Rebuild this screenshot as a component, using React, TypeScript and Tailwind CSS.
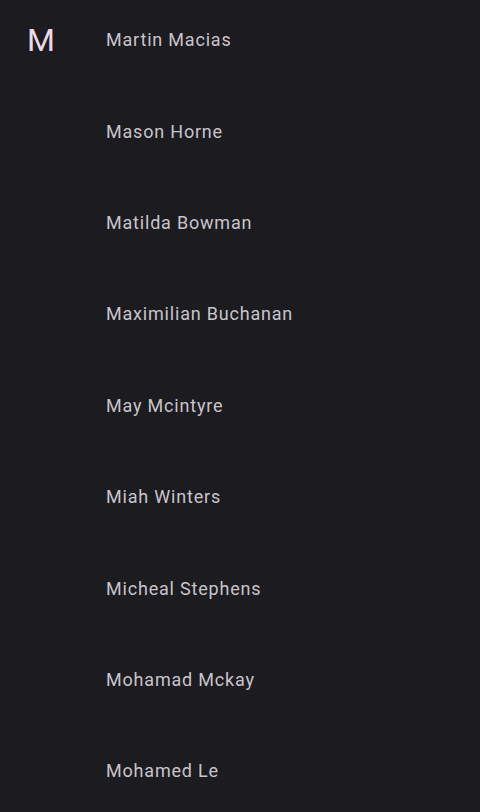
import React from "react";

const names = [
  "Martin Macias",
  "Mason Horne",
  "Matilda Bowman",
  "Maximilian Buchanan",
  "May Mcintyre",
  "Miah Winters",
  "Micheal Stephens",
  "Mohamad Mckay",
  "Mohamed Le",
];

export default function App() {
  return (
    <div
      className="w-[480px] h-[812px] overflow-hidden bg-[#1c1b1f]"
      style={{ fontFamily: "Roboto, 'Liberation Sans', sans-serif" }}
    >
      <div className="-mt-[6px] flex flex-col">
        {names.map((n, i) => (
          <div key={n} className="h-[91.4px] flex items-center">
            <div className="w-[106px] pl-[27px] flex items-center">
              {i === 0 && (
                <span className="text-[32px] leading-none text-[#ecd8e6]">M</span>
              )}
            </div>
            <span className="text-[18px] tracking-[0.8px] text-[#c8c4cc]">{n}</span>
          </div>
        ))}
      </div>
    </div>
  );
}
